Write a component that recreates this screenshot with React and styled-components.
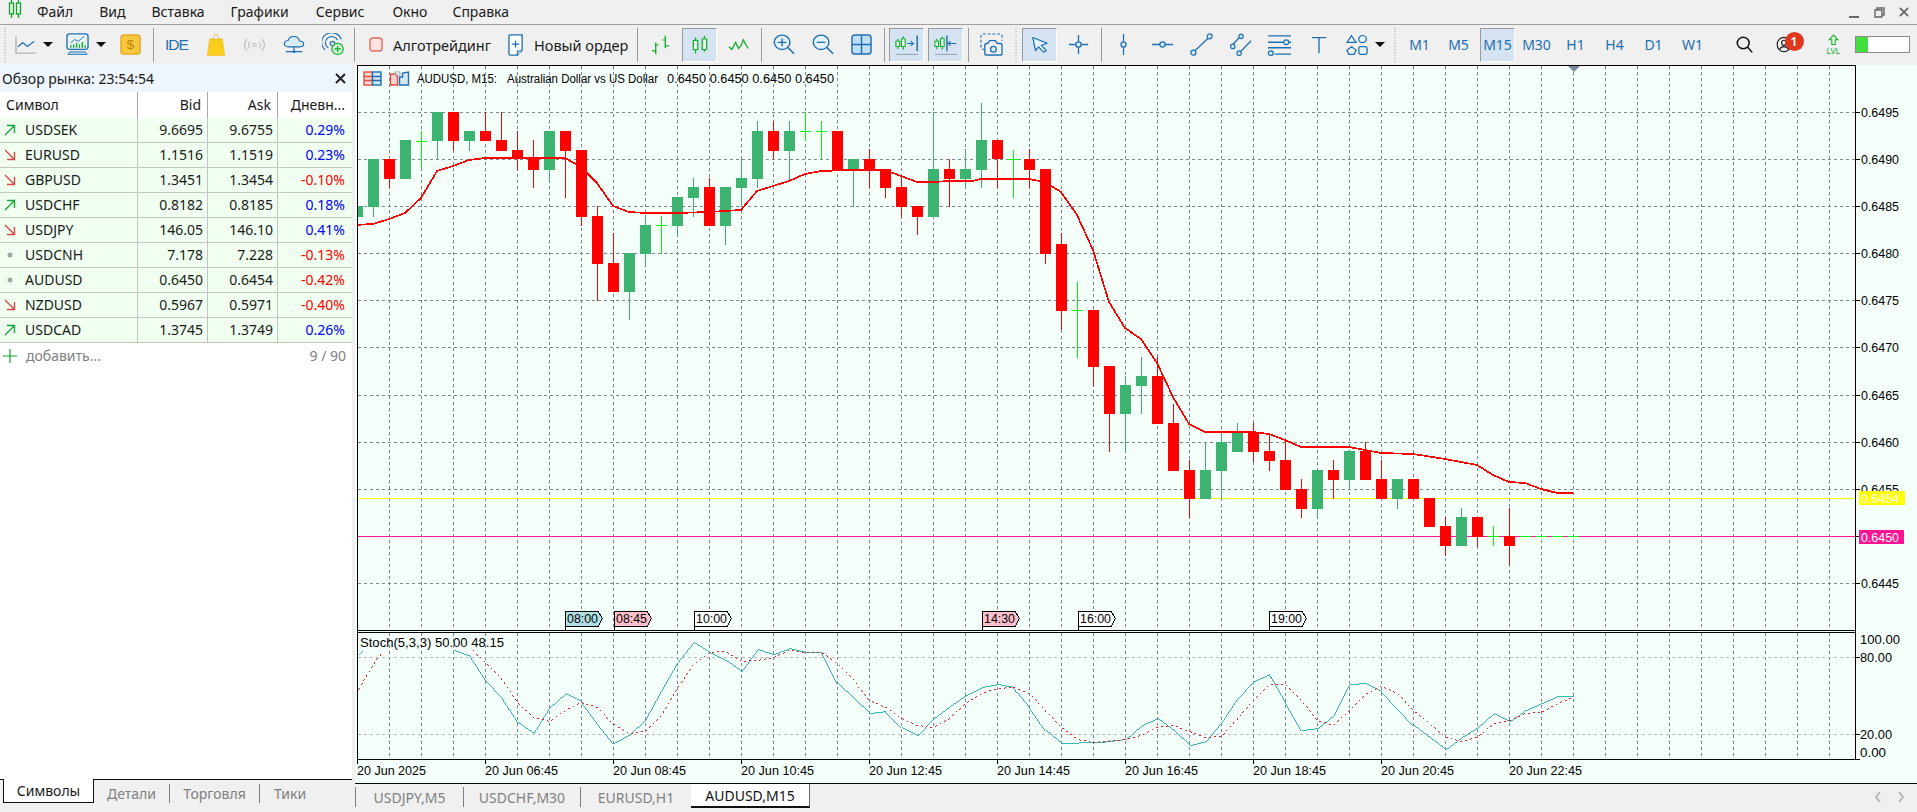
import React from 'react'
import styled, { createGlobalStyle, css } from 'styled-components'

const GlobalStyle = createGlobalStyle`
	html, body {
		margin: 0;
		padding: 0;
		width: 1917px;
		height: 812px;
		overflow: hidden;
		background: #f0f0f0;
		font-family: 'Noto Sans', 'Open Sans', sans-serif;
		font-size: 14px;
		color: #1a1a1a;
	}
`

const blue = '#1f6fb0'
const green = '#0fae2c'

const Window = styled.div`
	width: 1917px;
	height: 812px;
	display: flex;
	flex-direction: column;
`

const MenuBar = styled.div`
	height: 24px;
	display: flex;
	align-items: center;
	border-bottom: 1px solid #a0a0a0;
	padding-left: 8px;
`

const MenuItem = styled.span`
	margin-right: ${(p) => p.$gap}px;
	font-size: 14px;
	line-height: 24px;
`

const WindowButtons = styled.div`
	margin-left: auto;
	display: flex;
	align-items: center;
	gap: 14px;
	padding-right: 8px;
`

const WindowGlyph = styled.span`
	display: flex;
	color: #666;
`

const Toolbar = styled.div`
	height: 39px;
	display: flex;
	align-items: center;
`

const Grip = styled.div`
	width: ${(p) => p.$w}px;
	height: 34px;
	display: flex;
	justify-content: center;
	&::after {
		content: '';
		width: 2px;
		height: 34px;
		background: repeating-linear-gradient(to bottom, #c4c4c4 0 1px, transparent 1px 3px);
	}
`

const Sep = styled.div`
	width: ${(p) => p.$w}px;
	height: 34px;
	display: flex;
	justify-content: center;
	&::after {
		content: '';
		width: 1px;
		height: 34px;
		background: #9a9a9a;
	}
`

const Tool = styled.div`
	width: 35px;
	height: 34px;
	margin: 0 2px;
	box-sizing: border-box;
	display: flex;
	align-items: center;
	justify-content: center;
	color: ${blue};
	font-size: 14px;
	flex-shrink: 0;
	${(p) =>
		p.$active &&
		css`
			background: #d5e3f2;
			border: 1px solid #fff;
			border-top-color: #9a9a9a;
			border-left-color: #9a9a9a;
		`}
`

const UserTool = styled(Tool)`
	margin-right: 13px;
`

const DropTool = styled.div`
	width: ${(p) => p.$w}px;
	height: 34px;
	padding-left: ${(p) => p.$pad}px;
	box-sizing: border-box;
	display: flex;
	align-items: center;
	flex-shrink: 0;
`

const Caret = styled.span`
	margin-left: ${(p) => p.$gap}px;
	width: 0;
	height: 0;
	border-left: 5px solid transparent;
	border-right: 5px solid transparent;
	border-top: 5px solid #111;
`

const TextTool = styled.div`
	width: ${(p) => p.$w}px;
	height: 34px;
	padding-left: ${(p) => p.$pad}px;
	box-sizing: border-box;
	display: flex;
	align-items: center;
	gap: ${(p) => p.$gap}px;
	font-size: 14.5px;
	flex-shrink: 0;
`

const IdeLabel = styled.span`
	font-family: 'Liberation Sans', sans-serif;
	font-size: 15.5px;
	letter-spacing: -0.9px;
`

const RightTools = styled.div`
	margin-left: auto;
	display: flex;
	align-items: center;
	padding-right: 7px;
`

const UserWrap = styled.div`
	position: relative;
	width: 16px;
	height: 17px;
`

const Badge = styled.span`
	position: absolute;
	left: 9px;
	top: -4px;
	width: 19px;
	height: 19px;
	border-radius: 50%;
	background: #e0381f;
	color: #fff;
	font-size: 13px;
	font-weight: 600;
	line-height: 19px;
	text-align: center;
`

const LevelBar = styled.div`
	width: 55px;
	height: 17px;
	margin-left: 2px;
	box-sizing: border-box;
	border: 1px solid #8a8a8a;
	background: #fff;
	&::before {
		content: '';
		display: block;
		width: 12px;
		height: 100%;
		background: #43de3f;
	}
`

const Workspace = styled.div`
	flex: 1;
	display: flex;
	min-height: 0;
`

const MarketPanel = styled.aside`
	width: 352px;
	display: flex;
	flex-direction: column;
	background: #fff;
`

const PanelTitle = styled.div`
	height: 28px;
	background: #eef5fc;
	display: flex;
	align-items: center;
	justify-content: space-between;
	padding: 0 6px 0 2px;
	font-size: 14px;
`

const CloseMark = styled.span`
	display: flex;
	color: #222;
`

const HeadRow = styled.div`
	display: grid;
	grid-template-columns: 138px 70px 70px 73px;
	height: 26px;
	line-height: 26px;
	font-size: 14px;
	background: #fff;
`

const HeadCell = styled.div`
	box-sizing: border-box;
	border-right: ${(p) => (p.$last ? 'none' : '1px solid #a8a8a8')};
	padding: ${(p) => (p.$left ? '0 0 0 6px' : '0 6px 0 0')};
	text-align: ${(p) => (p.$left ? 'left' : 'right')};
	white-space: nowrap;
`

const QuoteRow = styled.div`
	display: grid;
	grid-template-columns: 138px 70px 70px 73px;
	height: 25px;
	box-sizing: border-box;
	border-bottom: 1px solid #c4c4c4;
	background: #f0fff0;
	line-height: 24px;
	font-size: 14px;
`

const QuoteCell = styled.div`
	box-sizing: border-box;
	border-right: ${(p) => (p.$last ? 'none' : '1px solid #c4c4c4')};
	padding-right: ${(p) => (p.$last ? 6 : 4)}px;
	text-align: right;
	color: ${(p) => p.$color || 'inherit'};
`

const SymbolCell = styled.div`
	box-sizing: border-box;
	border-right: 1px solid #c4c4c4;
	display: flex;
	align-items: center;
`

const TrendMark = styled.span`
	width: 25px;
	display: flex;
	justify-content: center;
	padding-right: 5px;
	box-sizing: border-box;
`

const AddRow = styled.div`
	height: 25px;
	display: flex;
	align-items: center;
	color: #808080;
	padding-right: 6px;
	font-size: 14px;
`

const AddMark = styled.svg`
	margin-left: 1px;
`

const AddLabel = styled.span`
	margin-left: 8px;
	flex: 1;
`

const PanelFill = styled.div`
	flex: 1;
`

const PanelTabs = styled.div`
	height: 33px;
	background: #f0f0f0;
	display: flex;
	align-items: flex-start;
	font-size: 14px;
	color: #808080;
	border-top: 1px solid #111;
	margin-top: -1px;
	box-sizing: border-box;
	padding-left: 3px;
`

const PanelTab = styled.div`
	width: ${(p) => p.$w}px;
	height: 23px;
	display: flex;
	align-items: center;
	justify-content: center;
	box-sizing: border-box;
	${(p) =>
		p.$active
			? css`
					background: #fff;
					color: #1a1a1a;
					border: 1px solid #111;
					border-top: 0;
					height: 24px;
					margin-top: -1px;
			  `
			: css`
					margin-top: 4px;
					height: 19px;
					border-right: ${p.$last ? 'none' : '1px solid #808080'};
			  `}
`

const ChartColumn = styled.main`
	flex: 1;
	margin-left: 3px;
	display: flex;
	flex-direction: column;
	min-width: 0;
`

const ChartSvg = styled.svg`
	display: block;
	width: 1562px;
	height: 720px;
	background: #f5fffa;
	font-family: 'Liberation Sans', sans-serif;
	font-size: 12px;
`

const ChartTabs = styled.div`
	flex: 1;
	display: flex;
	align-items: flex-start;
	font-size: 14px;
	color: #808080;
`

const ChartTab = styled.div`
	width: ${(p) => p.$w}px;
	box-sizing: border-box;
	display: flex;
	align-items: center;
	justify-content: center;
	flex-shrink: 0;
	${(p) =>
		p.$active
			? css`
					height: 24px;
					background: #fff;
					color: #111;
					border-bottom: 2px solid #111;
					border-right: 1px solid #666;
			  `
			: css`
					height: 20px;
					margin-top: 3px;
					border-left: 1px solid #808080;
			  `}
`

const TabArrows = styled.div`
	margin-left: auto;
	display: flex;
	gap: 17px;
	padding: 7px 12px 0 0;
	color: #b8b8b8;
`

// ---- toolbar drawings, w/h is the drawing grid, rw/rh the size on screen

const Svg = ({ w = 24, h = 24, rw, rh, children }) => (
	<svg width={rw || w} height={rh || h} viewBox={`0 0 ${w} ${h}`} preserveAspectRatio='none' fill='none'>
		{children}
	</svg>
)

const LineIcon = () => (
	<Svg w={22} h={24} rw={21} rh={19}>
		<path d='M1 2V23H22' stroke='#b4b4b4' strokeWidth='1.5' />
		<path d='M3 15L8 9.5L13 14.5L20 8' stroke={blue} strokeWidth='1.4' />
	</Svg>
)

const MonitorIcon = () => (
	<Svg w={24} h={28} rw={23} rh={23}>
		<rect x='1' y='1' width='22' height='19' rx='3' stroke={blue} strokeWidth='1.4' fill='#e8f3fb' />
		<path d='M5 12L9 8L13 10L19 4' stroke={blue} strokeWidth='1' />
		<path d='M5 18v-3M8 18v-4M11 18v-6M14 18v-4M17 18v-7M20 18v-3' stroke={green} strokeWidth='1.4' />
		<path d='M4 23H20L22 26H2Z' fill='#bcdcf1' stroke={blue} strokeWidth='1' />
	</Svg>
)

const DollarIcon = () => (
	<Svg w={22} h={22} rw={21} rh={21}>
		<rect x='1' y='1' width='20' height='20' rx='3' fill='#f8c83c' stroke='#e3a92a' strokeWidth='1.5' />
		<text x='11' y='16' textAnchor='middle' fontSize='14' fontFamily='Liberation Sans' fill='#b8860b'>
			$
		</text>
	</Svg>
)

const BagIcon = () => (
	<Svg w={20} h={24} rw={18} rh={22}>
		<path d='M3 5.5H17L19.5 23.5H0.5Z' fill='#fccf1c' stroke='#efb92a' strokeWidth='0.8' />
		<path d='M7 8V4C7 2 8.5 0.8 10 0.8S13 2 13 4V8' stroke='#d9ad3a' strokeWidth='0.9' />
	</Svg>
)

const RadioIcon = () => (
	<Svg w={22} h={18} rw={21} rh={14}>
		<g stroke='#c2c2c2' strokeWidth='1.3'>
			<circle cx='11' cy='9' r='2' />
			<path d='M6.5 4.5A6.5 6.5 0 0 0 6.5 13.5M15.5 4.5A6.5 6.5 0 0 1 15.5 13.5' />
			<path d='M3.5 1.5A11 11 0 0 0 3.5 16.5M18.5 1.5A11 11 0 0 1 18.5 16.5' />
		</g>
	</Svg>
)

const CloudIcon = () => (
	<Svg w={24} h={24} rw={22} rh={19}>
		<path
			d='M6 15C3 15 1.5 13 1.5 11C1.5 8.5 3.5 7 5.5 7C6.5 3.5 9 2 11.5 2C15 2 17.5 4.5 18 7.5C20.5 7.5 22.5 9 22.5 11.5C22.5 13.5 21 15 18.5 15Z'
			fill='#d8ecf9'
			stroke={blue}
			strokeWidth='1.3'
		/>
		<path d='M12 15V20M3 21H21' stroke={blue} strokeWidth='1.3' />
		<circle cx='12' cy='21' r='1.6' fill={blue} />
	</Svg>
)

const SignalIcon = () => (
	<Svg w={24} h={26} rw={22} rh={23}>
		<g stroke={blue} strokeWidth='1.3'>
			<path d='M3.5 19A11 11 0 1 1 21 7' />
			<path d='M7 17A7 7 0 1 1 17 8' />
			<circle cx='11.5' cy='12' r='2.5' />
		</g>
		<circle cx='17' cy='18' r='6.2' fill='#d6f5d6' stroke={green} strokeWidth='1.3' />
		<path d='M17 14.5V21.5M13.5 18H20.5' stroke={green} strokeWidth='1.4' />
	</Svg>
)

const AlgoIcon = () => (
	<Svg w={14} h={15}>
		<rect x='1' y='1' width='12' height='13' rx='2.5' fill='#fde3e0' stroke='#e26a62' strokeWidth='1.4' />
	</Svg>
)

const OrderIcon = () => (
	<Svg w={17} h={26} rw={16} rh={22}>
		<path d='M2.5 1H15V19L10 25H2.5C1.5 25 1 24.5 1 23.5V2.5C1 1.5 1.5 1 2.5 1Z' fill='#fff' stroke={blue} strokeWidth='1.4' />
		<path d='M10 25V20H15' stroke={blue} strokeWidth='1.2' fill='#bcdcf1' />
		<path d='M8 8V16M4 12H12' stroke={blue} strokeWidth='1.4' />
	</Svg>
)

const BarsIcon = () => (
	<Svg w={22} h={24} rw={21} rh={20}>
		<g stroke={green} strokeWidth='1.4'>
			<path d='M6 9V23M2 19H6M6 12H9' />
			<path d='M16 1V16M13 6H16M16 13H20' />
		</g>
	</Svg>
)

const CandlesIcon = () => (
	<Svg w={18} h={26} rw={16} rh={20}>
		<g stroke={green} strokeWidth='1.4' fill='none'>
			<path d='M4 3V24' />
			<rect x='1.5' y='7' width='5' height='12' fill='#e9fbe9' />
			<path d='M14 1V22' />
			<rect x='11.5' y='5' width='5' height='14' fill='#e9fbe9' />
		</g>
	</Svg>
)

const ZigIcon = () => (
	<Svg w={22} h={16} rw={21} rh={14}>
		<path d='M1 10L4 13L8 5L11 12L14 8L16 2L21 12' stroke={green} strokeWidth='1.4' />
	</Svg>
)

const ZoomIcon = ({ plus }) => (
	<Svg w={23} h={24} rw={22} rh={21}>
		<circle cx='9.5' cy='9.5' r='8.2' fill='#e4f2fb' stroke={blue} strokeWidth='1.5' />
		<path d='M15.5 15.5L22 22.5' stroke={blue} strokeWidth='1.6' />
		<path d={plus ? 'M9.5 5V14M5 9.5H14' : 'M5 9.5H14'} stroke={blue} strokeWidth='1.5' />
	</Svg>
)

const GridIcon = () => (
	<Svg w={22} h={22} rw={21} rh={21}>
		<rect x='1' y='1' width='20' height='20' rx='3' fill='#bfe0f6' stroke={blue} strokeWidth='1.5' />
		<path d='M11 1V21M1 11H21' stroke={blue} strokeWidth='1.5' />
	</Svg>
)

const ScrollIcon = ({ flip }) => (
	<Svg w={26} h={28} rw={24} rh={22}>
		<g stroke={green} strokeWidth='1.2' fill='#e9fbe9'>
			<path d='M3 6V19' />
			<rect x='1' y='9' width='4' height='7' />
			<path d='M9 3V20' />
			<rect x='7' y='6' width='4' height='10' />
		</g>
		<path d={flip ? 'M24 12H15M18 9L15 12L18 15' : 'M13 12H20M17 9L20 12L17 15'} stroke={blue} strokeWidth='1.2' />
		<path d={flip ? 'M14 2V22' : 'M24 2V22'} stroke='#0f5f9e' strokeWidth='1.4' />
		<path d='M1 26H25' stroke='#9aa7b4' strokeWidth='1.5' />
	</Svg>
)

const ShotIcon = () => (
	<Svg w={24} h={24} rw={23} rh={23}>
		<path d='M5 17H3C2 17 1 16 1 15V3C1 2 2 1 3 1H21C22 1 23 2 23 3V8' stroke={blue} strokeWidth='1.2' strokeDasharray='3 2' />
		<path
			d='M8 11L10 8H16L18 11H21C22 11 23 12 23 13V21C23 22 22 23 21 23H7C6 23 5 22 5 21V13C5 12 6 11 7 11Z'
			fill='#f0f0f0'
			stroke={blue}
			strokeWidth='1.4'
		/>
		<circle cx='14' cy='17' r='3' fill='#d8ecf9' stroke={blue} strokeWidth='1.4' />
	</Svg>
)

const CursorIcon = () => (
	<Svg w={20} h={22} rw={18} rh={17}>
		<path d='M2 2L18 9.5L11.5 12L17 19L14 21L8.5 14L5 19Z' fill='#e3f1fb' stroke={blue} strokeWidth='1.4' strokeLinejoin='round' />
	</Svg>
)

const CrossIcon = () => (
	<Svg w={22} h={22} rw={21} rh={21}>
		<path d='M11 1V8M11 14V21M1 11H8M14 11H21' stroke={blue} strokeWidth='1.4' />
		<circle cx='11' cy='11' r='2.8' fill='#d8ecf9' stroke={blue} strokeWidth='1.4' />
	</Svg>
)

const VLineIcon = () => (
	<Svg w={10} h={24} rw={9} rh={23}>
		<path d='M5 1V9M5 15V23' stroke={blue} strokeWidth='1.4' />
		<circle cx='5' cy='12' r='2.8' fill='#d8ecf9' stroke={blue} strokeWidth='1.4' />
	</Svg>
)

const HLineIcon = () => (
	<Svg w={24} h={10} rw={23} rh={9}>
		<path d='M1 5H9M15 5H23' stroke={blue} strokeWidth='1.4' />
		<circle cx='12' cy='5' r='2.8' fill='#d8ecf9' stroke={blue} strokeWidth='1.4' />
	</Svg>
)

const TrendIcon = () => (
	<Svg w={24} h={24} rw={23} rh={23}>
		<path d='M4.5 19L19.5 5' stroke={blue} strokeWidth='1.4' />
		<circle cx='3.5' cy='20.5' r='2.6' fill='#d8ecf9' stroke={blue} strokeWidth='1.3' />
		<circle cx='20.5' cy='3.5' r='2.6' fill='#d8ecf9' stroke={blue} strokeWidth='1.3' />
	</Svg>
)

const ChannelIcon = () => (
	<Svg w={24} h={24} rw={22} rh={23}>
		<path d='M3 12L11 4M12 19L23 8' stroke={blue} strokeWidth='1.4' />
		<circle cx='3' cy='14' r='2.4' fill='#d8ecf9' stroke={blue} strokeWidth='1.3' />
		<circle cx='12' cy='3.5' r='2.4' fill='#d8ecf9' stroke={blue} strokeWidth='1.3' />
		<circle cx='10' cy='21' r='2.4' fill='#d8ecf9' stroke={blue} strokeWidth='1.3' />
	</Svg>
)

const FiboIcon = () => (
	<Svg w={26} h={24} rw={25} rh={22}>
		<path d='M1 2H25M1 9H17M23 9H25M1 15H25M8 22H25' stroke={blue} strokeWidth='1.4' />
		<circle cx='20' cy='9' r='2.6' fill='#d8ecf9' stroke={blue} strokeWidth='1.3' />
		<circle cx='4' cy='21' r='2.6' fill='#d8ecf9' stroke={blue} strokeWidth='1.3' />
	</Svg>
)

const TextIcon = () => (
	<Svg w={18} h={22} rw={16} rh={18}>
		<path d='M1 2H17M9 2V21' stroke={blue} strokeWidth='1.5' />
	</Svg>
)

const ShapesIcon = () => (
	<Svg w={24} h={26} rw={22} rh={22}>
		<g stroke={blue} strokeWidth='1.4' fill='#eaf4fb'>
			<path d='M6 2L11 10H1Z' />
			<circle cx='18' cy='6' r='4.2' />
			<path d='M6 15L11 19L9 24H3L1 19Z' />
			<rect x='14' y='15' width='9' height='9' rx='2' />
		</g>
	</Svg>
)

const SearchIcon = () => (
	<Svg w={20} h={22} rw={17} rh={18}>
		<circle cx='8.5' cy='8.5' r='7' stroke='#111' strokeWidth='1.8' />
		<path d='M13.5 13.5L19 20' stroke='#111' strokeWidth='1.8' />
	</Svg>
)

const UserIcon = () => (
	<Svg w={20} h={20} rw={16} rh={17}>
		<circle cx='10' cy='10' r='8.5' stroke='#222' strokeWidth='1.5' />
		<circle cx='10' cy='8' r='3' stroke='#222' strokeWidth='1.4' />
		<path d='M4.5 16C5.5 13.5 7.5 12.5 10 12.5S14.5 13.5 15.5 16' stroke='#222' strokeWidth='1.4' />
	</Svg>
)

const LvlIcon = () => (
	<Svg w={20} h={22} rw={17} rh={21}>
		<path d='M10 1L15 6H12V11H8V6H5Z' fill='#e9fbe9' stroke={green} strokeWidth='1.2' />
		<text x='10' y='21' textAnchor='middle' fontFamily='Liberation Sans' fontSize='9.5' fill={green}>
			LVL
		</text>
	</Svg>
)

const CloseX = ({ size = 11 }) => (
	<svg width={size} height={size} viewBox='0 0 11 11'>
		<path d='M1 1L10 10M10 1L1 10' stroke='currentColor' strokeWidth='2' />
	</svg>
)

const AppCandle = () => (
	<svg width='14' height='20' viewBox='0 0 14 20' fill='none'>
		<g stroke='#12a32a' strokeWidth='1.3'>
			<path d='M3.5 1V19M10.5 1V19' />
			<rect x='1.5' y='4' width='4' height='11' fill='#e9fbe9' />
			<rect x='8.5' y='4' width='4' height='11' fill='#e9fbe9' />
		</g>
	</svg>
)

const TrendArrow = ({ dir }) => {
	if (dir === 'flat') {
		return (
			<svg width='10' height='10' viewBox='0 0 10 10'>
				<circle cx='5' cy='5' r='2.5' fill='#a6a6a6' />
			</svg>
		)
	}
	const up = dir === 'up'
	return (
		<svg width='12' height='12' viewBox='0 0 12 12' fill='none'>
			<path
				d={up ? 'M1 11L10 2M3 1.5H10.5V9' : 'M1 1L10 10M3 10.5H10.5V3'}
				stroke={up ? '#14a83c' : '#d94848'}
				strokeWidth='1.4'
			/>
		</svg>
	)
}

// ---- data

const menus = [
	['Файл', 26],
	['Вид', 26],
	['Вставка', 26],
	['Графики', 27],
	['Сервис', 28],
	['Окно', 25],
	['Справка', 0],
]

const quotes = [
	['USDSEK', '9.6695', '9.6755', '0.29%', 'up'],
	['EURUSD', '1.1516', '1.1519', '0.23%', 'down'],
	['GBPUSD', '1.3451', '1.3454', '-0.10%', 'down'],
	['USDCHF', '0.8182', '0.8185', '0.18%', 'up'],
	['USDJPY', '146.05', '146.10', '0.41%', 'down'],
	['USDCNH', '7.178', '7.228', '-0.13%', 'flat'],
	['AUDUSD', '0.6450', '0.6454', '-0.42%', 'flat'],
	['NZDUSD', '0.5967', '0.5971', '-0.40%', 'down'],
	['USDCAD', '1.3745', '1.3749', '0.26%', 'up'],
]

// [type, body top, body bottom, high, low] in page pixels, one bar every 16px from x=357
const candles = [
	['g', 206, 217, 206, 217], ['g', 159, 207, 159, 217], ['r', 159, 179, 159, 188], ['g', 140, 179, 140, 179],
	['d', 141, 141, 131, 169], ['g', 112, 141, 112, 159], ['r', 112, 141, 112, 151], ['g', 131, 141, 131, 151],
	['r', 131, 141, 112, 141], ['r', 140, 151, 112, 151], ['r', 150, 159, 131, 170], ['r', 159, 170, 140, 188],
	['g', 131, 170, 131, 182], ['r', 131, 151, 131, 198], ['r', 150, 217, 150, 226], ['r', 216, 264, 206, 301],
	['r', 263, 292, 233, 292], ['g', 253, 292, 253, 320], ['g', 225, 254, 215, 266], ['d', 225, 225, 216, 254],
	['g', 197, 226, 197, 236], ['g', 187, 198, 178, 217], ['r', 187, 226, 178, 226], ['g', 187, 226, 187, 245],
	['g', 178, 188, 159, 207], ['g', 131, 179, 121, 188], ['r', 131, 151, 121, 159], ['g', 131, 151, 121, 182],
	['d', 131, 131, 112, 141], ['d', 131, 131, 121, 159], ['r', 131, 170, 131, 170], ['g', 159, 170, 159, 207],
	['r', 159, 170, 149, 188], ['r', 169, 188, 169, 198], ['r', 187, 207, 177, 217], ['r', 206, 217, 206, 235],
	['g', 169, 217, 112, 217], ['r', 169, 179, 159, 207], ['g', 169, 179, 149, 188], ['g', 140, 170, 103, 188],
	['r', 140, 159, 140, 188], ['d', 159, 159, 150, 198], ['r', 159, 170, 149, 188], ['r', 169, 254, 169, 264],
	['r', 244, 311, 233, 330], ['d', 310, 310, 282, 358], ['r', 310, 367, 310, 386], ['r', 366, 414, 366, 452],
	['g', 385, 414, 376, 452], ['g', 376, 386, 357, 414], ['r', 376, 424, 357, 424], ['r', 423, 471, 404, 471],
	['r', 470, 499, 460, 518], ['g', 470, 499, 443, 499], ['g', 442, 471, 433, 499], ['g', 433, 452, 423, 452],
	['r', 433, 452, 423, 462], ['r', 451, 461, 433, 471], ['r', 460, 490, 440, 490], ['r', 489, 509, 479, 518],
	['g', 470, 509, 470, 518], ['r', 470, 480, 460, 499], ['g', 451, 480, 451, 489], ['r', 451, 480, 442, 480],
	['r', 479, 499, 460, 499], ['g', 479, 499, 479, 509], ['r', 479, 499, 479, 499], ['r', 498, 527, 498, 527],
	['r', 526, 546, 517, 556], ['g', 517, 546, 508, 546], ['r', 517, 537, 517, 547], ['d', 536, 536, 526, 546],
	['r', 536, 546, 508, 565], ['d', 536, 536, 536, 536], ['d', 536, 536, 536, 536], ['d', 536, 536, 536, 536],
	['d', 536, 536, 536, 536],
]

const maLine =
	'355,225 373,224 389,219 405,213 421,198 437,171 453,166 469,160 485,158 533,158 565,158 581,167 597,183 613,206 629,212 645,213 677,213 709,212 741,210 757,191 773,186 789,181 805,174 821,171 853,170 885,170 901,176 917,182 933,182 949,181 973,181 981,179 1029,179 1045,182 1061,192 1077,215 1093,250 1109,302 1125,328 1141,339 1157,363 1173,397 1189,424 1205,432 1253,432 1269,434 1285,440 1301,447 1349,447 1365,450 1381,453 1413,454 1445,459 1477,465 1493,475 1509,482 1525,483 1541,489 1557,493 1573,493'

const stochMainA = '358,654 362,650'
const stochMainB =
	'453,650 470,656 485,679 501,696 517,722 533,733 549,707 565,693 581,701 597,723 613,743 629,734 645,719 661,690 677,662 693,642 709,652 725,660 741,671 757,649 773,654 789,648 805,652 821,652 837,683 853,698 869,713 885,711 901,727 917,735 933,718 949,706 965,695 981,687 997,684 1013,687 1029,707 1045,730 1061,743 1093,742 1100,742 1125,739 1141,725 1157,718 1173,730 1189,745 1205,741 1221,722 1237,698 1253,681 1269,674 1285,702 1301,730 1317,728 1333,715 1349,684 1365,683 1381,691 1397,708 1413,725 1429,737 1445,749 1461,737 1477,727 1493,713 1509,721 1525,710 1541,703 1557,696 1573,696'
const stochSignalA = '358,689 374,662 382,652'
const stochSignalB =
	'472,650 485,662 501,678 517,702 533,717 549,721 565,710 581,702 597,707 613,724 629,733 645,731 661,715 677,688 693,664 709,652 725,651 741,661 757,660 773,657 789,650 805,652 821,652 837,663 853,679 869,700 885,707 901,718 917,725 933,727 949,718 965,703 981,693 997,688 1013,687 1029,693 1045,710 1061,727 1077,739 1093,742 1125,739 1141,735 1157,727 1173,725 1189,731 1205,737 1221,736 1237,718 1253,700 1269,684 1285,684 1301,700 1317,720 1333,725 1349,710 1365,694 1381,686 1397,693 1413,710 1429,723 1445,737 1461,741 1477,737 1493,723 1509,720 1525,713 1541,712 1557,703 1573,697'

const priceLevels = [
	[112, '0.6495'], [159, '0.6490'], [206, '0.6485'], [253, '0.6480'], [300, '0.6475'], [347, '0.6470'],
	[395, '0.6465'], [442, '0.6460'], [489, '0.6455'], [536, '0.6450'], [583, '0.6445'],
]

const vGrid = Array.from({ length: 46 }, (_, i) => 389 + i * 32)

const timeTags = [
	[565, '08:00', '#b0e0e6'],
	[614, '08:45', '#ffc0cb'],
	[694, '10:00', '#ffffff'],
	[982, '14:30', '#ffc0cb'],
	[1078, '16:00', '#ffffff'],
	[1269, '19:00', '#ffffff'],
]

const timeLabels = [
	'20 Jun 2025', '20 Jun 06:45', '20 Jun 08:45', '20 Jun 10:45', '20 Jun 12:45', '20 Jun 14:45',
	'20 Jun 16:45', '20 Jun 18:45', '20 Jun 20:45', '20 Jun 22:45',
]

const GRID = '#778899'
const BULL = '#3cb371'

const Candle = ({ data, i }) => {
	const [type, top, bottom, high, low] = data
	const cx = 357 + i * 16
	if (type === 'd') {
		return (
			<g fill='#00ff00'>
				<rect x={cx - 5} y={top} width='11' height='1' />
				{low > high && <rect x={cx} y={high} width='1' height={low - high} />}
			</g>
		)
	}
	return (
		<g fill={type === 'g' ? BULL : '#ff0000'}>
			<rect x={cx} y={high} width='1' height={low - high} />
			<rect x={cx - 5} y={top} width='11' height={bottom - top} />
		</g>
	)
}

const TitleIcons = () => (
	<g fill='none' strokeWidth='1.4'>
		<rect x='364' y='72' width='8.5' height='13' fill='#fbd5d2' stroke='#e0503f' />
		<path d='M364 76.5H372M364 80.5H372' stroke='#e0503f' />
		<rect x='372.5' y='72' width='8.5' height='13' fill='#d3e8f8' stroke={blue} />
		<path d='M372.5 76.5H381M372.5 80.5H381' stroke={blue} />
		<path d='M390.5 74H395.5L397.5 77V85H390.5Z' fill='#fbd5d2' stroke='#e0503f' />
		<path d='M402.5 73V77H399.5V85H408.5V72Z' fill='#d3e8f8' stroke={blue} />
		<rect x='395' y='72' width='5' height='3' stroke='#9aa7b4' strokeWidth='1' />
	</g>
)

const PriceChart = () => (
	<ChartSvg viewBox='355 64 1562 720'>
		<defs>
			<clipPath id='mainClip'>
				<rect x='358' y='66' width='1497' height='564' />
			</clipPath>
			<clipPath id='stochClip'>
				<rect x='358' y='633' width='1497' height='126' />
			</clipPath>
		</defs>

		<rect x='355' y='64' width='1562' height='1' fill='#f0f0f0' />

		<g stroke={GRID} strokeDasharray='3 3' shapeRendering='crispEdges'>
			{priceLevels.map(([y]) => (
				<line key={y} x1='358' x2='1855' y1={y + 0.5} y2={y + 0.5} />
			))}
			{vGrid.map((x) => (
				<line key={x} x1={x + 0.5} x2={x + 0.5} y1='66' y2='630' />
			))}
			{vGrid.map((x) => (
				<line key={x} x1={x + 0.5} x2={x + 0.5} y1='633' y2='759' />
			))}
		</g>
		<g stroke='#b8bcc0' strokeDasharray='3 3' shapeRendering='crispEdges'>
			<line x1='358' x2='1855' y1='657.5' y2='657.5' />
			<line x1='358' x2='1855' y1='734.5' y2='734.5' />
		</g>

		<rect x='358' y='498' width='1497' height='1' fill='#ffff00' />
		<rect x='358' y='536' width='1497' height='1' fill='#ff1493' />

		<g clipPath='url(#mainClip)' shapeRendering='crispEdges'>
			{candles.map((c, i) => (
				<Candle key={i} data={c} i={i} />
			))}
			<polyline points={maLine} fill='none' stroke='#ff0000' strokeWidth='1.7' />
		</g>

		<g clipPath='url(#stochClip)' fill='none' shapeRendering='crispEdges'>
			<g transform='translate(0.5 0.5)'>
				<polyline points={stochMainA} stroke='#20b2aa' strokeWidth='0.9' />
				<polyline points={stochMainB} stroke='#20b2aa' strokeWidth='0.9' />
				<polyline points={stochSignalA} stroke='#ff0000' strokeWidth='0.9' strokeDasharray='2 3' />
				<polyline points={stochSignalB} stroke='#ff0000' strokeWidth='0.9' strokeDasharray='2 3' />
			</g>
		</g>

		<g fill='#000' shapeRendering='crispEdges'>
			<rect x='357' y='65' width='1498' height='1' />
			<rect x='357' y='65' width='1' height='695' />
			<rect x='1855' y='65' width='1' height='695' />
			<rect x='357' y='630' width='1498' height='1' />
			<rect x='357' y='632' width='1499' height='1' />
			<rect x='357' y='759' width='1499' height='1' />
			<rect x='355' y='783' width='1562' height='1' />
			{priceLevels.map(([y]) => (
				<rect key={y} x='1856' y={y} width='4' height='1' />
			))}
			{[657, 734, 759].map((y) => (
				<rect key={y} x='1856' y={y} width='4' height='1' />
			))}
			{timeLabels.map((_, i) => (
				<rect key={i} x={357 + i * 128} y='760' width='1' height='4' />
			))}
		</g>

		<path d='M1568 66H1580L1574 72Z' fill={GRID} />

		<TitleIcons />
		<text x='417' y='83' textLength='80' lengthAdjust='spacingAndGlyphs'>
			AUDUSD, M15:
		</text>
		<text x='507' y='83' textLength='151' lengthAdjust='spacingAndGlyphs'>
			Australian Dollar vs US Dollar
		</text>
		<text x='667' y='83' textLength='167' lengthAdjust='spacingAndGlyphs'>
			0.6450 0.6450 0.6450 0.6450
		</text>
		<text x='360' y='647' textLength='144' lengthAdjust='spacingAndGlyphs'>
			Stoch(5,3,3) 50.00 48.15
		</text>

		{timeTags.map(([x, label, bg]) => (
			<g key={label}>
				<path
					d={`M${x + 0.5} 630V611.5H${x + 33}L${x + 37.5} 618.5L${x + 33} 626.5H${x + 0.5}`}
					fill={bg}
					stroke='#000'
					shapeRendering='crispEdges'
				/>
				<text x={x + 2} y='623' textLength='31' lengthAdjust='spacingAndGlyphs'>
					{label}
				</text>
			</g>
		))}

		<g>
			{priceLevels.map(([y, label]) => (
				<text key={y} x='1861' y={y + 5} textLength='38' lengthAdjust='spacingAndGlyphs'>
					{label}
				</text>
			))}
			<text x='1860' y='644' textLength='40' lengthAdjust='spacingAndGlyphs'>100.00</text>
			<text x='1860' y='662' textLength='32' lengthAdjust='spacingAndGlyphs'>80.00</text>
			<text x='1860' y='739' textLength='32' lengthAdjust='spacingAndGlyphs'>20.00</text>
			<text x='1860' y='757' textLength='26' lengthAdjust='spacingAndGlyphs'>0.00</text>
		</g>

		<rect x='1859' y='491' width='46' height='14' fill='#ffff00' />
		<text x='1861' y='503' fill='#fff' textLength='38' lengthAdjust='spacingAndGlyphs'>0.6454</text>
		<rect x='1859' y='530' width='45' height='14' fill='#ff1493' />
		<text x='1861' y='542' fill='#fff' textLength='38' lengthAdjust='spacingAndGlyphs'>0.6450</text>

		{timeLabels.map((label, i) => (
			<text key={label} x={357 + i * 128} y='775' textLength={i === 0 ? 69 : 73} lengthAdjust='spacingAndGlyphs'>
				{label}
			</text>
		))}
	</ChartSvg>
)

export default function App() {
	return (
		<Window>
			<GlobalStyle />
			<MenuBar>
				<MenuItem $gap={15}>
					<AppCandle />
				</MenuItem>
				{menus.map(([label, gap]) => (
					<MenuItem key={label} $gap={gap}>
						{label}
					</MenuItem>
				))}
				<WindowButtons>
					<WindowGlyph>
						<svg width='11' height='11' viewBox='0 0 11 11'>
							<path d='M0 10H10' stroke='currentColor' strokeWidth='2' />
						</svg>
					</WindowGlyph>
					<WindowGlyph>
						<svg width='11' height='11' viewBox='0 0 11 11' fill='none'>
							<path d='M3 3V1H10V8H8M1 3H8V10H1Z' stroke='currentColor' strokeWidth='1.4' />
						</svg>
					</WindowGlyph>
					<WindowGlyph>
						<CloseX size={10} />
					</WindowGlyph>
				</WindowButtons>
			</MenuBar>

			<Toolbar>
				<Grip $w={10} />
				<DropTool $w={52} $pad={5}>
					<LineIcon />
					<Caret $gap={7} />
				</DropTool>
				<DropTool $w={51} $pad={4}>
					<MonitorIcon />
					<Caret $gap={7} />
				</DropTool>
				<DropTool $w={37} $pad={7}>
					<DollarIcon />
				</DropTool>
				<Sep $w={7} />
				<Tool>
					<IdeLabel>IDE</IdeLabel>
				</Tool>
				<Tool>
					<BagIcon />
				</Tool>
				<Tool>
					<RadioIcon />
				</Tool>
				<Tool>
					<CloudIcon />
				</Tool>
				<Tool>
					<SignalIcon />
				</Tool>
				<Sep $w={4} />
				<TextTool $w={141} $pad={13} $gap={10}>
					<AlgoIcon />
					Алготрейдинг
				</TextTool>
				<TextTool $w={136} $pad={11} $gap={10}>
					<OrderIcon />
					Новый ордер
				</TextTool>
				<Sep $w={8} />
				<Tool>
					<BarsIcon />
				</Tool>
				<Tool $active>
					<CandlesIcon />
				</Tool>
				<Tool>
					<ZigIcon />
				</Tool>
				<Sep $w={6} />
				<Tool>
					<ZoomIcon plus />
				</Tool>
				<Tool>
					<ZoomIcon />
				</Tool>
				<Tool>
					<GridIcon />
				</Tool>
				<Sep $w={6} />
				<Tool $active>
					<ScrollIcon />
				</Tool>
				<Tool $active>
					<ScrollIcon flip />
				</Tool>
				<Sep $w={7} />
				<Tool>
					<ShotIcon />
				</Tool>
				<Grip $w={9} />
				<Tool $active>
					<CursorIcon />
				</Tool>
				<Tool>
					<CrossIcon />
				</Tool>
				<Sep $w={6} />
				<Tool>
					<VLineIcon />
				</Tool>
				<Tool>
					<HLineIcon />
				</Tool>
				<Tool>
					<TrendIcon />
				</Tool>
				<Tool>
					<ChannelIcon />
				</Tool>
				<Tool>
					<FiboIcon />
				</Tool>
				<Tool>
					<TextIcon />
				</Tool>
				<DropTool $w={52} $pad={8}>
					<ShapesIcon />
					<Caret $gap={7} />
				</DropTool>
				<Grip $w={10} />
				{['M1', 'M5', 'M15', 'M30', 'H1', 'H4', 'D1', 'W1'].map((tf) => (
					<Tool key={tf} $active={tf === 'M15'}>
						{tf}
					</Tool>
				))}
				<RightTools>
					<Tool>
						<SearchIcon />
					</Tool>
					<UserTool>
						<UserWrap>
							<UserIcon />
							<Badge>1</Badge>
						</UserWrap>
					</UserTool>
					<Tool>
						<LvlIcon />
					</Tool>
					<LevelBar />
				</RightTools>
			</Toolbar>

			<Workspace>
				<MarketPanel>
					<PanelTitle>
						Обзор рынка: 23:54:54
						<CloseMark>
							<CloseX />
						</CloseMark>
					</PanelTitle>
					<HeadRow>
						<HeadCell $left>Символ</HeadCell>
						<HeadCell>Bid</HeadCell>
						<HeadCell>Ask</HeadCell>
						<HeadCell $last>Дневн...</HeadCell>
					</HeadRow>
					{quotes.map(([symbol, bid, ask, change, dir]) => (
						<QuoteRow key={symbol}>
							<SymbolCell>
								<TrendMark>
									<TrendArrow dir={dir} />
								</TrendMark>
								{symbol}
							</SymbolCell>
							<QuoteCell>{bid}</QuoteCell>
							<QuoteCell>{ask}</QuoteCell>
							<QuoteCell $last $color={change.startsWith('-') ? '#ff0000' : '#0000ff'}>
								{change}
							</QuoteCell>
						</QuoteRow>
					))}
					<AddRow>
						<AddMark width='17' height='14' viewBox='0 0 17 14'>
							<path d='M9 0V14M2 7H16' stroke='#12a32a' strokeWidth='1.2' />
						</AddMark>
						<AddLabel>добавить...</AddLabel>
						9 / 90
					</AddRow>
					<PanelFill />
					<PanelTabs>
						<PanelTab $active $w={91}>
							Символы
						</PanelTab>
						<PanelTab $w={76}>Детали</PanelTab>
						<PanelTab $w={90}>Торговля</PanelTab>
						<PanelTab $w={60} $last>
							Тики
						</PanelTab>
					</PanelTabs>
				</MarketPanel>
				<ChartColumn>
					<PriceChart />
					<ChartTabs>
						<ChartTab $w={108}>USDJPY,M5</ChartTab>
						<ChartTab $w={117}>USDCHF,M30</ChartTab>
						<ChartTab $w={111}>EURUSD,H1</ChartTab>
						<ChartTab $active $w={119}>
							AUDUSD,M15
						</ChartTab>
						<TabArrows>
							<svg width='7' height='12' viewBox='0 0 7 12'>
								<path d='M6 1L2 6L6 11' fill='none' stroke='currentColor' strokeWidth='2' />
							</svg>
							<svg width='7' height='12' viewBox='0 0 7 12'>
								<path d='M1 1L5 6L1 11' fill='none' stroke='currentColor' strokeWidth='2' />
							</svg>
						</TabArrows>
					</ChartTabs>
				</ChartColumn>
			</Workspace>
		</Window>
	)
}
